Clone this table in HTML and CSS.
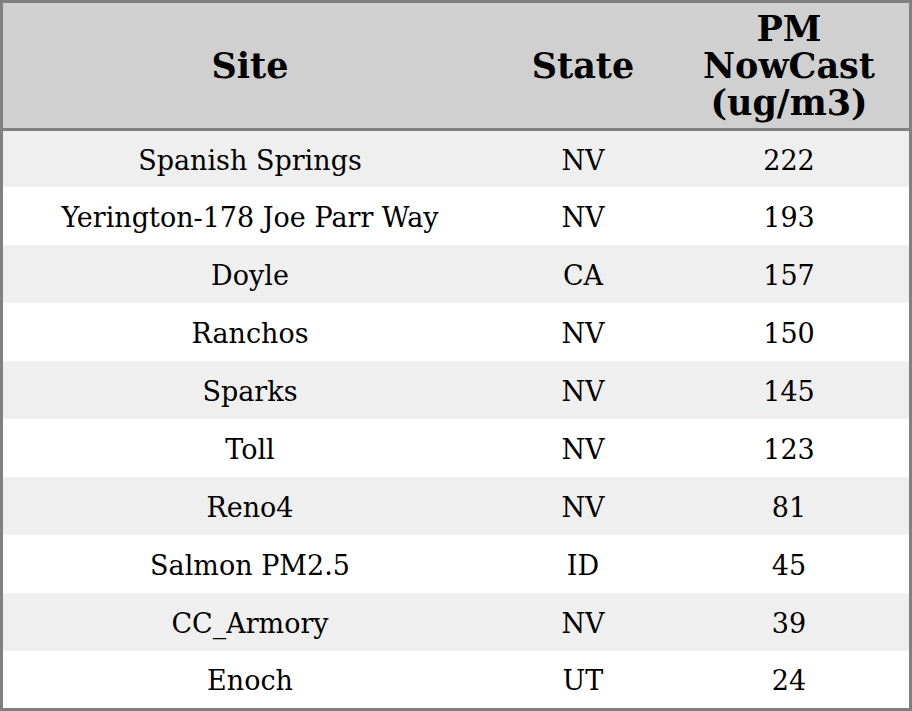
FILE: index.html
```html
<!DOCTYPE html>
<html>
<head>
<meta charset="utf-8">
<link rel="stylesheet" href="styles.css">
</head>
<body>
<table class="data">
  <colgroup>
    <col class="c-site">
    <col class="c-state">
    <col class="c-pm">
  </colgroup>
  <thead>
    <tr>
      <th>Site</th>
      <th>State</th>
      <th>PM<br>NowCast<br>(ug/m3)</th>
    </tr>
  </thead>
  <tbody>
    <tr class="first"><td>Spanish Springs</td><td>NV</td><td>222</td></tr>
    <tr><td>Yerington-178 Joe Parr Way</td><td>NV</td><td>193</td></tr>
    <tr><td>Doyle</td><td>CA</td><td>157</td></tr>
    <tr><td>Ranchos</td><td>NV</td><td>150</td></tr>
    <tr><td>Sparks</td><td>NV</td><td>145</td></tr>
    <tr><td>Toll</td><td>NV</td><td>123</td></tr>
    <tr><td>Reno4</td><td>NV</td><td>81</td></tr>
    <tr><td>Salmon PM2.5</td><td>ID</td><td>45</td></tr>
    <tr><td>CC_Armory</td><td>NV</td><td>39</td></tr>
    <tr class="last"><td>Enoch</td><td>UT</td><td>24</td></tr>
  </tbody>
</table>
</body>
</html>
```
FILE: styles.css
```css
html, body {
  margin: 0;
  padding: 0;
  background: #ffffff;
}
.data {
  width: 912px;
  border-collapse: separate;
  border-spacing: 0;
  border: 3px solid #808080;
  table-layout: fixed;
  font-family: "DejaVu Serif", serif;
  color: #000;
}
.c-site { width: 494px; }
.c-state { width: 172px; }
.c-pm { width: 240px; }
.data th, .data td {
  box-sizing: border-box;
  padding: 0;
  text-align: center;
  vertical-align: middle;
}
.data th {
  height: 128px;
  background: #d0d0d0;
  border-bottom: 3px solid #808080;
  font-size: 35px;
  font-weight: bold;
  line-height: 37px;
}
.data td {
  height: 58px;
  font-size: 27px;
  line-height: 32px;
  padding-top: 3px;
}
.data tbody tr:nth-child(odd) td {
  background: #efefef;
}
.data tr.first td { height: 56px; }
.data tr.last td { height: 57px; }
```
